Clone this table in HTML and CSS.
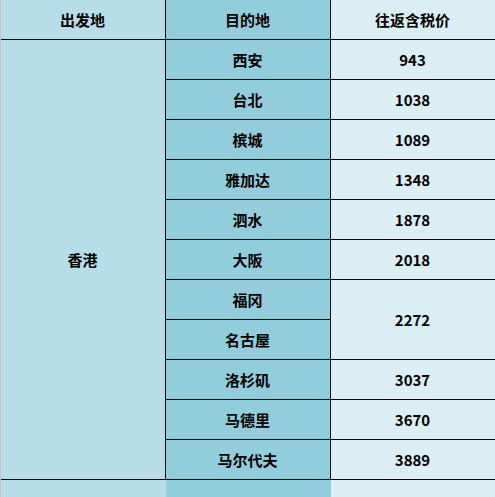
FILE: index.html
```html
<!DOCTYPE html>
<html lang="zh">
<head>
<meta charset="utf-8">
<title>往返含税价</title>
<link rel="stylesheet" href="styles.css">
</head>
<body>
<div class="sheet">
  <div class="grid">
    <div class="cell c1">出发地</div>
    <div class="cell c2">目的地</div>
    <div class="cell c3">往返含税价</div>

    <div class="cell c1 origin">香港</div>

    <div class="cell c2">西安</div><div class="cell c3">943</div>
    <div class="cell c2">台北</div><div class="cell c3">1038</div>
    <div class="cell c2">槟城</div><div class="cell c3">1089</div>
    <div class="cell c2">雅加达</div><div class="cell c3">1348</div>
    <div class="cell c2">泗水</div><div class="cell c3">1878</div>
    <div class="cell c2">大阪</div><div class="cell c3">2018</div>
    <div class="cell c2">福冈</div><div class="cell c3 span2">2272</div>
    <div class="cell c2">名古屋</div>
    <div class="cell c2">洛杉矶</div><div class="cell c3">3037</div>
    <div class="cell c2">马德里</div><div class="cell c3">3670</div>
    <div class="cell c2">马尔代夫</div><div class="cell c3">3889</div>

    <div class="cell c1 tail"></div>
    <div class="cell c2 tail"></div>
    <div class="cell c3 tail"></div>
  </div>
</div>
</body>
</html>
```

FILE: styles.css
```css
html, body {
  margin: 0;
  padding: 0;
  background: #ffffff;
}
body {
  overflow: hidden;
  height: 497px;
}
.sheet {
  border-left: 1px solid #c6c6c6;
  height: 497px;
  overflow: hidden;
}
.grid {
  display: grid;
  grid-template-columns: 165px 165px 165px;
  grid-auto-rows: 40px;
  font-family: "Noto Sans CJK SC", "Noto Sans", sans-serif;
  font-weight: 700;
  font-size: 15px;
  color: #000;
}
.cell {
  box-sizing: border-box;
  border-right: 1px solid #000;
  border-bottom: 1px solid #000;
  display: flex;
  align-items: center;
  justify-content: center;
  padding-right: 1px;
  padding-bottom: 1px;
}
.c1 { background: #b7dee8; }
.c2 { background: #92cddc; }
.c3 { background: #daeef3; }
.origin { grid-row: span 11; }
.span2 { grid-row: span 2; }
.tail {
  border: none;
}
```
